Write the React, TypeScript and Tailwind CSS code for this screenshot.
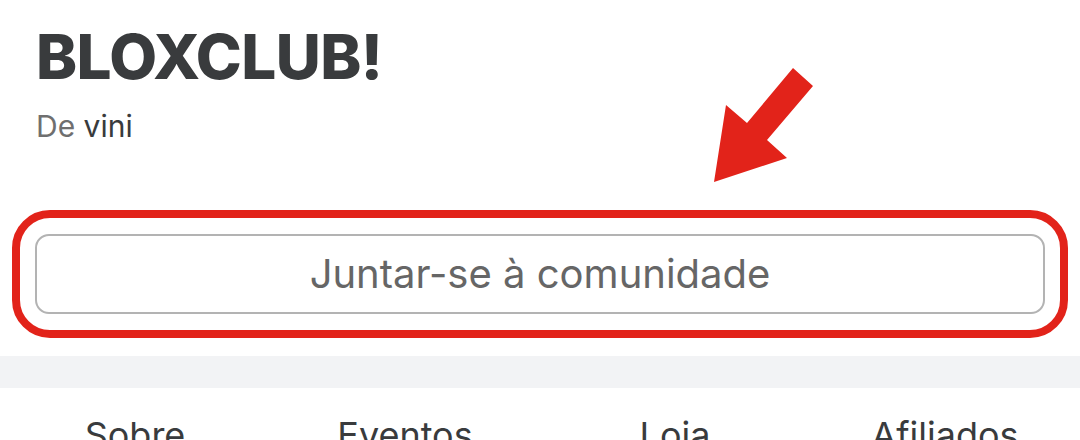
export default function App() {
  return (
    <div className="relative w-[1080px] h-[440px] overflow-hidden bg-white" style={{ fontFamily: "Inter, 'Noto Sans', sans-serif" }}>
      {/* header */}
      <div className="px-[36px] pt-[26px]">
        <h1 className="text-[62px] leading-[62px] font-extrabold text-[#393b3d] tracking-[-0.6px]">BLOXCLUB!</h1>
        <p className="mt-[22px] text-[30px] leading-[32px]">
          <span className="text-[#6f6f6f]">De </span>
          <span className="text-[#393b3d]">vini</span>
        </p>
      </div>

      {/* annotation arrow */}
      <svg className="absolute left-[700px] top-[60px]" width="130" height="130" viewBox="700 60 130 130">
        <polygon points="793,68 813,86 767,140 787,158 714,182 726,105 747,123" fill="#e2231a" />
      </svg>

      {/* highlighted join button */}
      <div className="mx-[12px] mt-[68px] h-[128px] rounded-[38px] border-[8px] border-[#e2231a] px-[15px] py-[16px]">
        <button className="w-full h-full rounded-[14px] border-2 border-[#b3b3b3] text-[40px] text-[#666666]">
          Juntar-se à comunidade
        </button>
      </div>

      <div className="mt-[18px] h-[32px] bg-[#f2f3f5]" />

      {/* tabs */}
      <div className="grid grid-cols-4 pt-[20px] text-[36px] text-[#393b3d]">
        {["Sobre", "Eventos", "Loja", "Afiliados"].map((t) => (
          <div key={t} className="text-center">{t}</div>
        ))}
      </div>
    </div>
  )
}
